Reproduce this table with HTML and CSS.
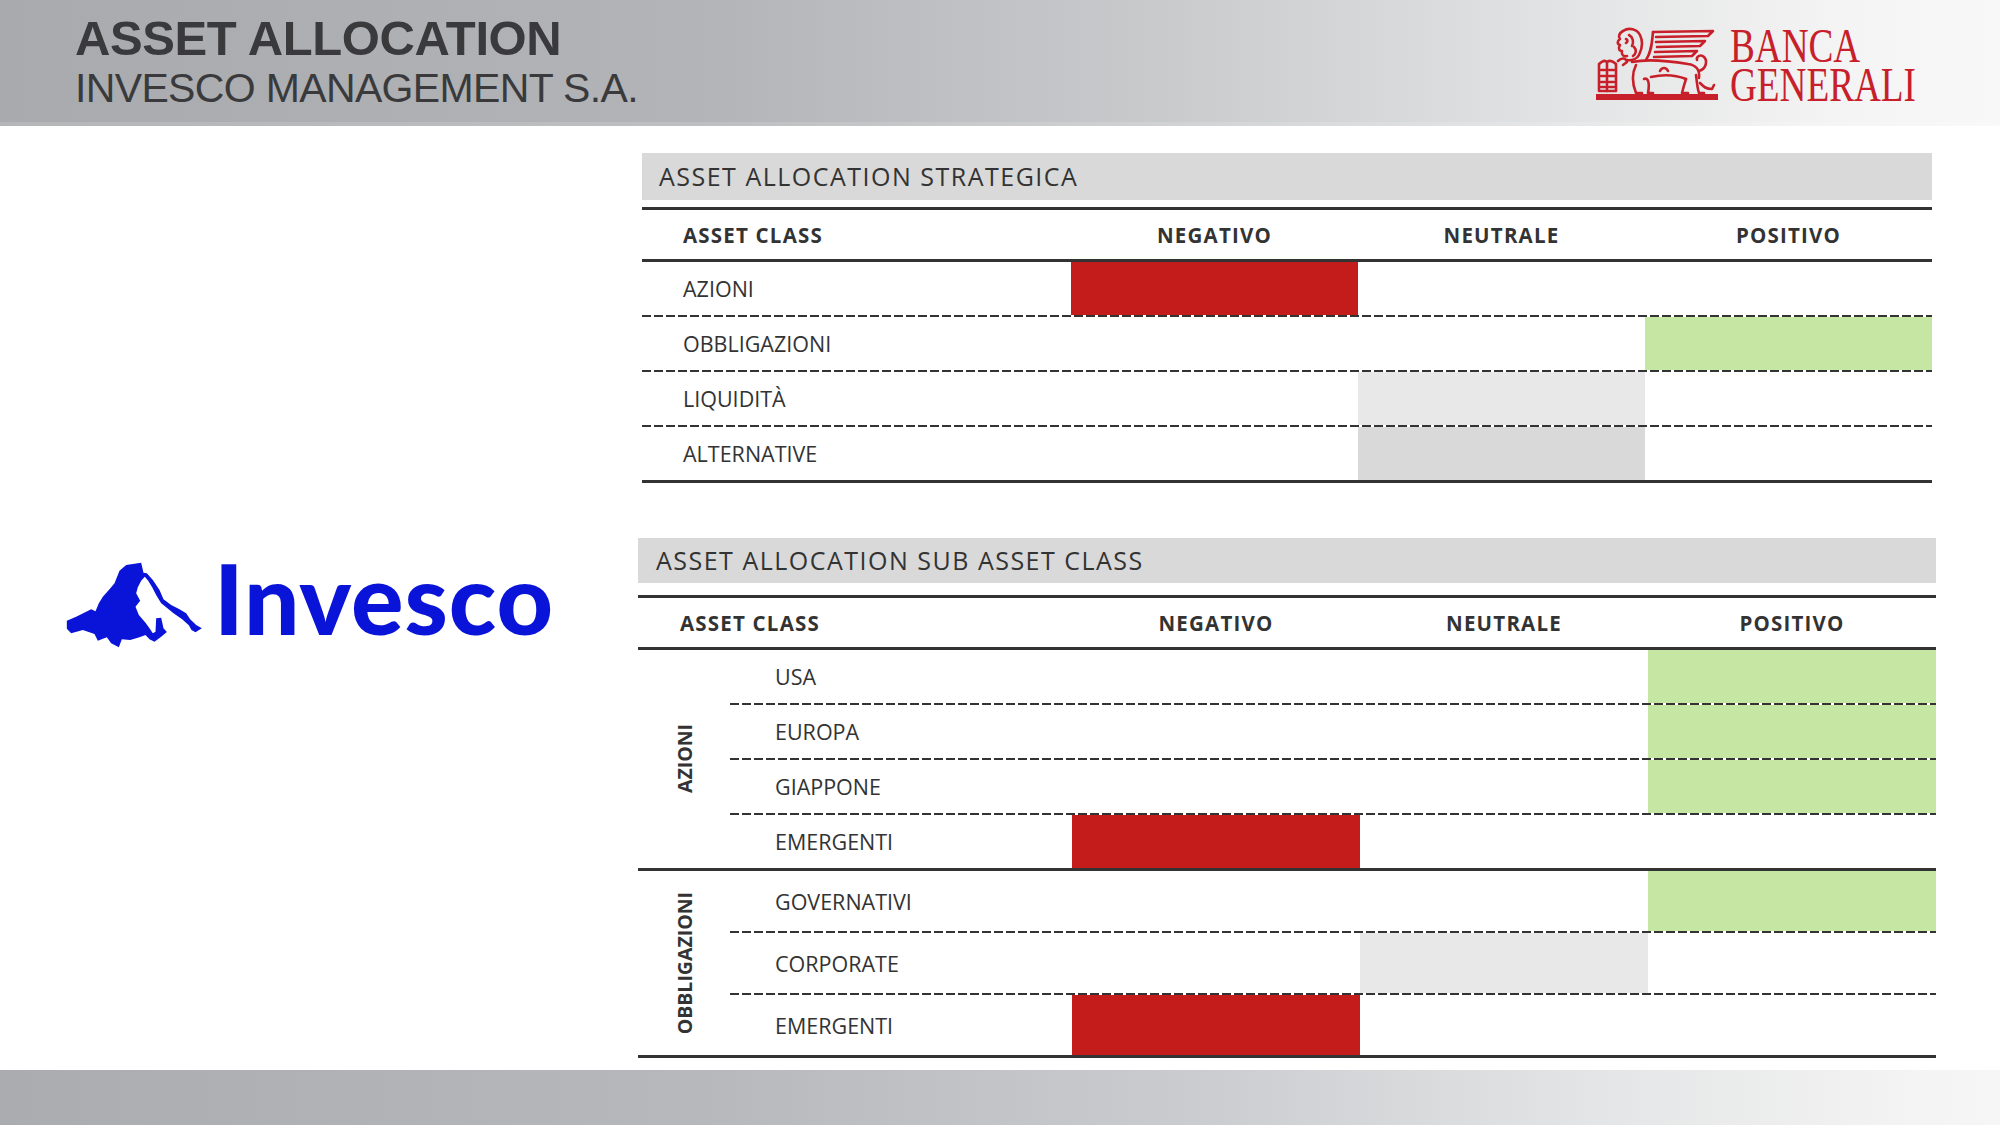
FILE: index.html
```html
<!DOCTYPE html>
<html lang="it">
<head>
<meta charset="utf-8">
<title>Asset Allocation - Invesco Management S.A.</title>
<link rel="stylesheet" href="styles.css">
</head>
<body>
<div class="page">
  <header class="top">
    <div class="titles">
      <h1 class="title-main">ASSET ALLOCATION</h1>
      <h2 class="title-sub">INVESCO MANAGEMENT S.A.</h2>
    </div>
    <div class="bg-logo">
      <svg class="lion" viewBox="0 0 122 73" aria-hidden="true">
        <g fill="none" stroke="#c8202a" stroke-width="2.6" stroke-linecap="round" stroke-linejoin="round">
          <path d="M3 37 Q8 32 11 35 Q15 32 20 37 L20 64 L3 64 Z"/>
          <path d="M11 35 V64"/>
          <path d="M5 43 H9 M13 43 H18 M5 49 H9 M13 49 H18 M5 55 H9 M13 55 H18 M5 60 H9 M13 60 H18"/>
          <path d="M27 4 C33 0 41 2 44 8 C47 14 46 22 43 28 C41 32 36 34 31 33"/>
          <path d="M27 4 C23 6 22 10 24 12 C21 14 21 17 24 18 C22 21 23 24 26 24 C25 27 27 30 31 29"/>
          <path d="M33 8 C37 10 38 15 36 19 M38 20 C41 23 40 27 37 29 M30 12 C32 13 32 15 30 16"/>
          <path d="M22 34 C26 30 30 31 31 35 L27 38"/>
          <path d="M57 5 L117 4 L112 9 L60 10"/>
          <path d="M60 15 L109 14 L104 19 L61 20"/>
          <path d="M59 25 L101 24 L96 29 L58 30"/>
          <path d="M50 33 C56 24 56 14 57 5"/>
          <path d="M36 35 C50 32 74 34 92 37 C100 38 104 43 103 51"/>
          <path d="M40 38 C36 46 36 56 40 66 L46 66"/>
          <path d="M48 52 C52 50 54 56 52 66 L57 66"/>
          <path d="M55 50 C68 47 80 48 90 52"/>
          <path d="M90 52 C88 58 87 62 86 66 L92 66"/>
          <path d="M100 48 C101 55 101 60 103 66 L108 66"/>
          <path d="M64 44 C66 40 70 40 72 44"/>
          <path d="M103 44 C110 42 112 34 108 30 C105 27 100 29 101 33"/>
          <path d="M104 56 C108 60 110 62 116 62 L118 58"/>
        </g>
        <rect x="0" y="67" width="122" height="6" fill="#c8202a"/>
      </svg>
      <div class="bg-text">
        <div class="bg-line">BANCA</div>
        <div class="bg-line">GENERALI</div>
      </div>
    </div>
  </header>

  <main class="content">
    <div class="left">
      <div class="invesco">
        <svg class="mountain" viewBox="30 36 410 258" aria-hidden="true">
          <path fill="#0a14d8" d="M32 212 L60 200 L105 178 L118 184 L128 160 L140 140 L160 118 L175 100 L190 62 L210 45 L255 38 L262 68 L272 70 L290 90 L310 120 L322 148 L345 165 L370 178 L390 190 L402 208 L420 225 L437 235 L418 247 L406 240 L398 226 L378 208 L352 190 L330 172 L315 160 L300 135 L288 112 L276 92 L266 80 L255 92 L245 112 L240 130 L252 152 L238 170 L248 195 L268 218 L280 235 L290 250 L298 245 L300 205 L315 203 L322 235 L332 246 L315 260 L295 275 L280 268 L268 255 L250 262 L222 270 L197 268 L188 292 L165 280 L152 262 L125 272 L115 252 L80 240 L45 250 L32 236 Z"/>
        </svg>
        <span class="invesco-word">Invesco</span>
      </div>
    </div>

    <div class="right">
      <section class="tbl tbl1">
        <div class="tbl-title">ASSET ALLOCATION STRATEGICA</div>
        <div class="hd">
          <div class="hd-lbl">ASSET CLASS</div>
          <div class="hd-col">NEGATIVO</div>
          <div class="hd-col">NEUTRALE</div>
          <div class="hd-col">POSITIVO</div>
        </div>
        <div class="row">
          <div class="lbl">AZIONI</div>
          <div class="cell neg"></div><div class="cell"></div><div class="cell"></div>
        </div>
        <div class="row">
          <div class="lbl">OBBLIGAZIONI</div>
          <div class="cell"></div><div class="cell"></div><div class="cell pos"></div>
        </div>
        <div class="row">
          <div class="lbl">LIQUIDITÀ</div>
          <div class="cell"></div><div class="cell neu-light"></div><div class="cell"></div>
        </div>
        <div class="row last">
          <div class="lbl">ALTERNATIVE</div>
          <div class="cell"></div><div class="cell neu"></div><div class="cell"></div>
        </div>
      </section>

      <section class="tbl tbl2">
        <div class="tbl-title">ASSET ALLOCATION SUB ASSET CLASS</div>
        <div class="hd">
          <div class="hd-lbl">ASSET CLASS</div>
          <div class="hd-col">NEGATIVO</div>
          <div class="hd-col">NEUTRALE</div>
          <div class="hd-col">POSITIVO</div>
        </div>
        <div class="group">
          <div class="group-lbl"><span>AZIONI</span></div>
          <div class="group-rows">
            <div class="row sub">
              <div class="lbl">USA</div>
              <div class="cell"></div><div class="cell"></div><div class="cell pos"></div>
            </div>
            <div class="row sub">
              <div class="lbl">EUROPA</div>
              <div class="cell"></div><div class="cell"></div><div class="cell pos"></div>
            </div>
            <div class="row sub">
              <div class="lbl">GIAPPONE</div>
              <div class="cell"></div><div class="cell"></div><div class="cell pos"></div>
            </div>
            <div class="row sub end">
              <div class="lbl">EMERGENTI</div>
              <div class="cell neg"></div><div class="cell"></div><div class="cell"></div>
            </div>
          </div>
        </div>
        <div class="group g2">
          <div class="group-lbl"><span>OBBLIGAZIONI</span></div>
          <div class="group-rows">
            <div class="row sub tall">
              <div class="lbl">GOVERNATIVI</div>
              <div class="cell"></div><div class="cell"></div><div class="cell pos"></div>
            </div>
            <div class="row sub tall">
              <div class="lbl">CORPORATE</div>
              <div class="cell"></div><div class="cell neu-light"></div><div class="cell"></div>
            </div>
            <div class="row sub tall end">
              <div class="lbl">EMERGENTI</div>
              <div class="cell neg"></div><div class="cell"></div><div class="cell"></div>
            </div>
          </div>
        </div>
      </section>
    </div>
  </main>

  <footer class="bottom"></footer>
</div>
</body>
</html>
```

FILE: styles.css
```css
html, body {
  margin: 0;
  padding: 0;
}

body {
  width: 2000px;
  height: 1125px;
  overflow: hidden;
  background: #ffffff;
  font-family: "Open Sans", "Noto Sans", sans-serif;
  color: #333333;
}

.page {
  display: flex;
  flex-direction: column;
  height: 1125px;
}

/* ---------- header ---------- */
.top {
  flex: none;
  height: 126px;
  box-sizing: border-box;
  display: flex;
  justify-content: space-between;
  align-items: flex-start;
  background:
    linear-gradient(to top, rgba(255, 255, 255, 0.14) 0 4px, transparent 4px),
    linear-gradient(90deg, #a8aaad 0%, #b2b4b7 35%, #c9cacc 58%, #e2e3e4 78%, #f4f4f4 92%, #f8f8f8 100%);
}

.titles {
  padding: 14px 0 0 75px;
  font-family: "Liberation Sans", Arial, sans-serif;
  color: #3a3a3c;
}

.title-main {
  margin: 0;
  font-size: 49px;
  line-height: 49px;
  font-weight: 700;
  letter-spacing: -0.4px;
}

.title-sub {
  margin: 5px 0 0;
  font-size: 41px;
  line-height: 41px;
  font-weight: 400;
  letter-spacing: -0.65px;
}

.bg-logo {
  display: flex;
  align-items: flex-start;
  gap: 12px;
  margin: 27px 30px 0 0;
}

.lion {
  display: block;
  width: 122px;
  height: 73px;
}

.bg-text {
  margin-top: -1px;
  width: 240px;
  font-family: "Liberation Serif", "Times New Roman", serif;
  font-size: 48px;
  color: #c8202a;
  transform: scaleX(0.775);
  transform-origin: left top;
}

.bg-line {
  height: 39px;
  line-height: 39px;
}

/* ---------- content ---------- */
.content {
  flex: 1;
  display: flex;
}

.left {
  flex: none;
  width: 638px;
  box-sizing: border-box;
  padding: 422px 0 0 66px;
}

.invesco {
  display: flex;
  align-items: flex-start;
  gap: 11px;
}

.mountain {
  display: block;
  width: 137px;
  height: 86px;
  margin-top: 14px;
}

.invesco-word {
  font-family: Lato, "Open Sans", sans-serif;
  font-weight: 900;
  font-size: 98px;
  line-height: 98px;
  letter-spacing: 1px;
  color: #0a14d8;
}

.right {
  flex: 1;
  padding-top: 27px;
}

/* ---------- tables ---------- */
.tbl1 {
  width: 1290px;
  margin-left: 4px;
}

.tbl2 {
  width: 1298px;
  margin-top: 55px;
}

.tbl-title {
  height: 47px;
  line-height: 47px;
  padding-left: 17px;
  background: #d9d9d9;
  font-size: 25px;
  letter-spacing: 1.5px;
  color: #333333;
}

.tbl2 .tbl-title {
  height: 45px;
  line-height: 45px;
  padding-left: 18px;
}

.hd {
  display: grid;
  grid-template-columns: 429px repeat(3, 1fr);
  align-items: center;
  height: 49px;
  margin-top: 7px;
  border-top: 3px solid #333333;
  border-bottom: 3px solid #333333;
  font-weight: 700;
  font-size: 20.5px;
  letter-spacing: 1.2px;
  color: #333333;
}

.tbl2 .hd {
  grid-template-columns: 434px repeat(3, 1fr);
  margin-top: 12px;
}

.hd-lbl {
  padding-left: 41px;
}

.tbl2 .hd-lbl {
  padding-left: 42px;
}

.hd-col {
  text-align: center;
}

.row {
  display: grid;
  grid-template-columns: 429px repeat(3, 1fr);
  height: 55px;
  box-sizing: border-box;
  padding-bottom: 2px;
  background: repeating-linear-gradient(90deg, #333333 0 9px, transparent 9px 12px) left bottom / 100% 2px no-repeat;
}

.row.last {
  height: 56px;
  padding-bottom: 0;
  background: none;
  border-bottom: 3px solid #333333;
}

.lbl {
  display: flex;
  align-items: center;
  padding-left: 41px;
  font-size: 21.5px;
  color: #333333;
}

.cell.neg { background: #c31c1a; }
.cell.pos { background: #c6e6a3; }
.cell.neu { background: #d9d9d9; }
.cell.neu-light { background: #e8e8e8; }

.group {
  display: flex;
  border-bottom: 3px solid #333333;
}

.group-lbl {
  flex: none;
  width: 92px;
  display: flex;
  align-items: center;
  justify-content: center;
}

.group-lbl span {
  writing-mode: vertical-rl;
  transform: rotate(180deg);
  font-weight: 700;
  font-size: 19.5px;
  color: #333333;
}

.group-rows {
  flex: 1;
}

.row.sub {
  grid-template-columns: 342px repeat(3, 1fr);
}

.row.sub .lbl {
  padding-left: 45px;
}

.row.sub.end {
  height: 53px;
  padding-bottom: 0;
  background: none;
}

.row.sub.tall {
  height: 62px;
}

.row.sub.tall.end {
  height: 60px;
}

/* ---------- footer ---------- */
.bottom {
  flex: none;
  height: 55px;
  background: linear-gradient(90deg, #aaacaf 0%, #b6b8bb 35%, #cbcccf 60%, #e4e5e6 80%, #f3f3f3 95%, #f6f6f6 100%);
}
```
